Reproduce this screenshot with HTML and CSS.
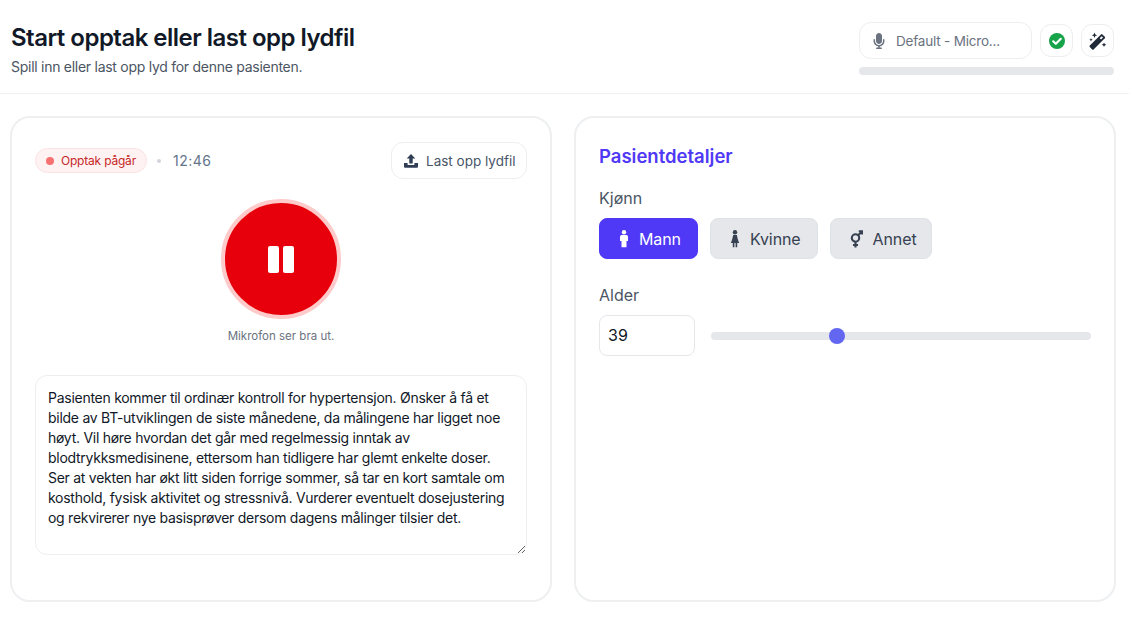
FILE: index.html
```html
<!DOCTYPE html>
<html lang="en">
<head>
  <meta charset="UTF-8" />
  <title>Start opptak</title>
  <link rel="stylesheet" href="styles.css">
</head>
<body>
  <header class="topbar">
    <div class="heading">
      <h1>Start opptak eller last opp lydfil</h1>
      <p>Spill inn eller last opp lyd for denne pasienten.</p>
    </div>
    <div class="mic-tools">
      <div class="mic-row">
        <div class="mic-select">
          <svg class="mic-icon" viewBox="0 0 384 512"><path d="M192 0C139 0 96 43 96 96v160c0 53 43 96 96 96s96-43 96-96V96c0-53-43-96-96-96zM64 216c0-13-11-24-24-24s-24 11-24 24v40c0 89 66 163 152 174.300V464h-48c-13 0-24 11-24 24s11 24 24 24h144c13 0 24-11 24-24s-11-24-24-24h-48v-33.700C302 419 368 345 368 256v-40c0-13-11-24-24-24s-24 11-24 24v40c0 71-57 128-128 128S64 327 64 256v-40z"/></svg>
          <span>Default - Micro...</span>
        </div>
        <div class="icon-btn">
          <svg width="18" height="18" viewBox="0 0 18 18"><circle cx="9" cy="9" r="8" fill="#16a34a"/><path d="M5.200 9.300l2.600 2.500 5-5" fill="none" stroke="#fff" stroke-width="2.200" stroke-linecap="round" stroke-linejoin="round"/></svg>
        </div>
        <div class="icon-btn">
          <svg width="18" height="18" viewBox="0 0 18 18" fill="#1f2937"><path d="M.8 13.600L12 2.400a1 1 0 0 1 1.400 0l2.400 2.400a1 1 0 0 1 0 1.400L4.600 17.400a1 1 0 0 1-1.400 0L.8 15a1 1 0 0 1 0-1.400z"/><path d="M10.700 6.200l2-2 1.300 1.300-2 2z" fill="#fff"/><path d="M5.500.5l.8 1.900 1.900.8-1.900.8-.8 1.900-.8-1.900-1.900-.8 1.900-.8zM2 6l.5 1.200 1.200.5-1.200.5L2 9.400l-.5-1.200-1.200-.5 1.200-.5zM15 10.500l.7 1.600 1.600.7-1.600.7-.7 1.600-.7-1.600-1.600-.7 1.600-.7z"/></svg>
        </div>
      </div>
      <div class="level-bar"></div>
    </div>
  </header>

  <main class="panels">
    <section class="card recorder">
      <div class="rec-top">
        <div class="rec-status">
          <span class="badge"><i class="dot"></i>Opptak pågår</span>
          <i class="sep"></i>
          <span class="timer">12:46</span>
        </div>
        <button class="upload-btn">
          <svg width="16" height="16" viewBox="0 0 16 16" fill="#2f3e55"><path d="M8 1l4.300 4.600H9.700V10.500H6.300V5.600H3.700z"/><path d="M1 10h3.600v1.900h6.800V10H15v3.800a1 1 0 0 1-1 1H2a1 1 0 0 1-1-1z"/></svg>
          Last opp lydfil
        </button>
      </div>
      <div class="rec-center">
        <button class="rec-btn"><i></i><i></i></button>
        <p class="mic-note">Mikrofon ser bra ut.</p>
      </div>
      <textarea class="notes">Pasienten kommer til ordinær kontroll for hypertensjon. Ønsker å få et bilde av BT-utviklingen de siste månedene, da målingene har ligget noe høyt. Vil høre hvordan det går med regelmessig inntak av blodtrykksmedisinene, ettersom han tidligere har glemt enkelte doser. Ser at vekten har økt litt siden forrige sommer, så tar en kort samtale om kosthold, fysisk aktivitet og stressnivå. Vurderer eventuelt dosejustering og rekvirerer nye basisprøver dersom dagens målinger tilsier det.</textarea>
    </section>

    <section class="card details">
      <h2>Pasientdetaljer</h2>
      <div class="field-label gender-label">Kjønn</div>
      <div class="genders">
        <button class="gender active">
          <svg width="10" height="18" viewBox="0 0 10 18" fill="currentColor"><circle cx="5" cy="2.200" r="2.200"/><path d="M2.800 5h4.400A1.800 1.800 0 0 1 9 6.800V11H7.500v6.200H2.500V11H1V6.800A1.800 1.800 0 0 1 2.800 5z"/></svg>
          Mann
        </button>
        <button class="gender">
          <svg width="10" height="18" viewBox="0 0 10 18" fill="currentColor"><circle cx="5" cy="2.200" r="2.200"/><path d="M3.200 5h3.600l1.200 5 1.200 3H7.200v4.200H5.600V13H4.400v4.200H2.800V13H.8L2 10z"/></svg>
          Kvinne
        </button>
        <button class="gender other">
          <svg width="13" height="18" viewBox="0 0 13 18" fill="none" stroke="currentColor" stroke-width="2.100"><circle cx="5.500" cy="8" r="3.700"/><path d="M5.500 12v5.500M3 15h5M8.200 5.300L12 1.500M8.800 1.200h3.400v3.400"/></svg>
          Annet
        </button>
      </div>
      <div class="field-label age-label">Alder</div>
      <div class="age-row">
        <div class="age-input">39</div>
        <div class="slider"><span class="thumb"></span></div>
      </div>
    </section>
  </main>
</body>
</html>
```

FILE: styles.css
```css
* {
  box-sizing: border-box;
}
body {
  margin: 0;
  background: #fff;
  color: #111827;
  font-family: Inter, "Noto Sans", sans-serif;
}
.topbar {
  display: flex;
  justify-content: space-between;
  height: 94px;
  padding: 22px 15px 0 11px;
  border-bottom: 1px solid #f0f1f3;
}
h1 {
  margin: 1px 0 0;
  font-size: 24px;
  line-height: 30px;
  font-weight: 600;
  letter-spacing: -0.52px;
}
.heading p {
  margin: 4px 0 0;
  font-size: 14px;
  line-height: 20px;
  letter-spacing: -0.27px;
  color: #4b5563;
}
.mic-tools {
  width: 255px;
}
.mic-row {
  display: flex;
  align-items: center;
  gap: 8px;
}
.mic-select {
  display: flex;
  align-items: center;
  gap: 11px;
  width: 173px;
  height: 37px;
  padding-left: 13px;
  border: 1px solid #eceef1;
  border-radius: 12px;
  font-size: 13.500px;
  letter-spacing: -0.2px;
  color: #6b7280;
}
.mic-icon {
  width: 12px;
  height: 16px;
  fill: #6b7280;
}
.icon-btn {
  display: flex;
  align-items: center;
  justify-content: center;
  width: 33px;
  height: 33px;
  border: 1px solid #eceef1;
  border-radius: 11px;
}
.level-bar {
  height: 8px;
  margin-top: 8px;
  border-radius: 4px;
  background: #e5e7eb;
}
.panels {
  display: flex;
  gap: 22px;
  padding: 22px 13px 0 10px;
}
.card {
  flex: 1;
  height: 486px;
  padding: 24px 23px;
  border: 2px solid #eeeff1;
  border-radius: 20px;
}
.rec-top {
  display: flex;
  justify-content: space-between;
  align-items: center;
}
.rec-status {
  display: flex;
  align-items: center;
}
.badge {
  display: flex;
  align-items: center;
  width: 112px;
  height: 25px;
  padding: 0 0 0 10px;
  border: 1px solid #fee2e2;
  border-radius: 13px;
  background: #fef2f2;
  color: #c62828;
  font-size: 12px;
  letter-spacing: -0.2px;
}
.dot {
  width: 8px;
  height: 8px;
  margin-right: 7px;
  border-radius: 50%;
  background: #f87171;
}
.sep {
  width: 4px;
  height: 4px;
  margin: 0 12px 0 10px;
  border-radius: 50%;
  background: #d1d5db;
}
.timer {
  font-size: 14px;
  letter-spacing: 0.5px;
  color: #64748b;
}
.upload-btn {
  display: flex;
  align-items: center;
  gap: 7px;
  width: 136px;
  height: 37px;
  padding: 0 0 0 11px;
  border: 1px solid #eceef1;
  border-radius: 12px;
  background: #fff;
  color: #475569;
  font-family: inherit;
  font-size: 13.500px;
}
.rec-center {
  display: flex;
  flex-direction: column;
  align-items: center;
  margin-top: 20px;
}
.rec-btn {
  display: flex;
  align-items: center;
  justify-content: center;
  gap: 4px;
  width: 120px;
  height: 120px;
  padding: 0;
  border: 4px solid #fecaca;
  border-radius: 50%;
  background: #e7000b;
}
.rec-btn i {
  width: 11px;
  height: 27px;
  border-radius: 2px;
  background: #fff;
}
.mic-note {
  margin: 8px 0 0;
  font-size: 11.500px;
  line-height: 18px;
  color: #6b7280;
}
.notes {
  display: block;
  width: 100%;
  height: 180px;
  margin-top: 30px;
  padding: 12px;
  border: 1px solid #eceef1;
  border-radius: 12px;
  color: #111827;
  font-family: inherit;
  font-size: 14px;
  line-height: 20px;
  letter-spacing: -0.27px;
  outline: none;
  resize: vertical;
}
h2 {
  margin: 0;
  font-size: 18.500px;
  line-height: 28px;
  font-weight: 600;
  color: #4f39f6;
}
.field-label {
  font-size: 16px;
  line-height: 24px;
  color: #4b5563;
}
.gender-label {
  margin-top: 16px;
}
.genders {
  display: flex;
  gap: 12px;
  margin-top: 8px;
}
.gender {
  display: flex;
  align-items: center;
  gap: 10px;
  height: 41px;
  padding: 0 16px 0 19px;
  border: 1px solid #dfe2e6;
  border-radius: 8px;
  background: #e5e7eb;
  color: #374151;
  font-family: inherit;
  font-size: 16px;
  letter-spacing: -0.1px;
}
.gender.other {
  padding-right: 14px;
}
.gender.active {
  border-color: #4f39f6;
  background: #4f39f6;
  color: #fff;
}
.age-label {
  margin-top: 24px;
}
.age-row {
  display: flex;
  align-items: center;
  gap: 16px;
  margin-top: 8px;
}
.age-input {
  width: 96px;
  height: 41px;
  padding-left: 8px;
  border: 1px solid #e5e7eb;
  border-radius: 8px;
  font-size: 16px;
  line-height: 39px;
}
.slider {
  position: relative;
  flex: 1;
  height: 8px;
  border-radius: 4px;
  background: #e5e7eb;
}
.thumb {
  position: absolute;
  left: 118px;
  top: -4px;
  width: 16px;
  height: 16px;
  border-radius: 50%;
  background: #6366f1;
}
```
